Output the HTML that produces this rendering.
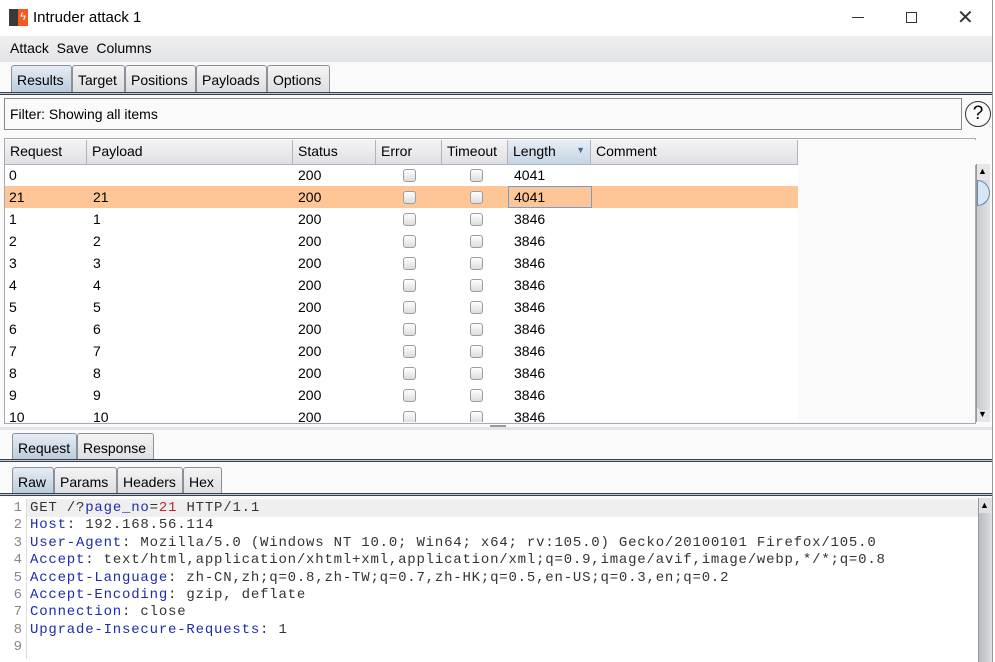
<!DOCTYPE html>
<html><head><meta charset="utf-8"><style>
*{box-sizing:border-box;margin:0;padding:0}
body{width:995px;height:662px;overflow:hidden;background:#fafafa;font-family:"Liberation Sans",Arial,sans-serif;font-size:14px;color:#000;position:relative}
.a{position:absolute}
.tab{position:absolute;height:28px;border:1px solid #8a8f99;border-bottom:none;border-radius:3px 3px 0 0;background:linear-gradient(#f4f4f4,#dcdde0);padding:6px 5px 0 5px;font-size:14px}
.tab.sel{background:linear-gradient(#e6edf4,#b8cadb)}
.line{position:absolute;left:0;width:992px;height:3px;background:#b8cadb;border-top:1px solid #3a3f4a;border-bottom:1px solid #3a3f4a}
.th{position:absolute;top:140px;height:25px;border-right:1px solid #b0b3ba;border-bottom:1px solid #b0b3ba;background:linear-gradient(#f4f4f6,#dfe0e4);padding:3px 5px}
.row{position:absolute;left:5px;width:793px;height:22px}
.row span{position:absolute;top:3px}
.cb{position:absolute;top:5px;width:13px;height:13px;border:1px solid #9a9da3;border-radius:3px;background:linear-gradient(#fff,#dcdcdc)}
.code{position:absolute;left:0;font-family:"Liberation Mono",monospace;font-size:14px;white-space:pre;line-height:17.4px}
.k{color:#1d2bb0}
.ls{letter-spacing:0.8px}
</style></head><body>
<div class="a" style="left:0;top:0;width:995px;height:36px;background:#fff"></div>
<div class="a" style="left:9px;top:9px;width:9px;height:17px;background:#3a3a3a"></div>
<div class="a" style="left:18px;top:9px;width:10px;height:17px;background:#f25a22;color:#fff;font-size:11px;line-height:17px;text-align:center">ϟ</div>
<div class="a" style="left:33px;top:9px;font-size:15px">Intruder attack 1</div>
<div class="a" style="left:852px;top:17px;width:12px;height:1px;background:#333"></div>
<div class="a" style="left:906px;top:12px;width:11px;height:11px;border:1px solid #333"></div>
<div class="a" style="left:957px;top:5px;font-size:20px;color:#333">✕</div>
<div class="a" style="left:992px;top:0;width:3px;height:662px;background:#fff;border-left:1px solid #999"></div>
<div class="a" style="left:0;top:36px;width:992px;height:26px;background:linear-gradient(#f0f0f0,#e2e3e6)"></div>
<div class="a" style="left:10px;top:40px">Attack&nbsp; Save&nbsp; Columns</div>
<div class="tab sel" style="left:11px;top:65px;width:61px">Results</div>
<div class="tab" style="left:72px;top:65px;width:53px">Target</div>
<div class="tab" style="left:125px;top:65px;width:71px">Positions</div>
<div class="tab" style="left:196px;top:65px;width:71px">Payloads</div>
<div class="tab" style="left:267px;top:65px;width:63px">Options</div>
<div class="line" style="top:92px"></div>
<div class="a" style="left:4px;top:98px;width:958px;height:32px;border:1px solid #888;background:#fafafa;padding:7px 5px">Filter: Showing all items</div>
<div class="a" style="left:965px;top:101px;width:26px;height:26px;border:1.5px solid #333;border-radius:50%;text-align:center;font-size:19px;line-height:23px">?</div>
<div class="a" style="left:4px;top:138px;width:972px;height:286px;border:1px solid #a6a9b0;background:#fafafa"></div>
<div class="a" style="left:5px;top:164px;width:793px;height:258px;background:#fff"></div>
<div class="th" style="left:5px;width:82px">Request</div>
<div class="th" style="left:87px;width:206px">Payload</div>
<div class="th" style="left:293px;width:83px">Status</div>
<div class="th" style="left:376px;width:66px">Error</div>
<div class="th" style="left:442px;width:66px">Timeout</div>
<div class="th" style="left:508px;width:83px;background:linear-gradient(#e8eef5,#c5d4e3)">Length<span style="position:absolute;right:5px;top:5px;font-size:9px;color:#4a6a95">▼</span></div>
<div class="th" style="left:591px;width:207px">Comment</div>
<div class="a" style="left:798px;top:140px;width:178px;height:25px;background:#fafafa"></div>
<div class="a" style="left:5px;top:164px;width:793px;height:258px;overflow:hidden">
<div style="position:relative">
<div class="row" style="left:0;top:0"><span style="left:4px">0</span><span style="left:293px">200</span><div class="cb" style="left:398px"></div><div class="cb" style="left:465px"></div><span style="left:509px">4041</span></div>
<div class="row" style="left:0;top:22px;background:#fec596"><span style="left:4px">21</span><span style="left:88px">21</span><span style="left:293px">200</span><div class="cb" style="left:398px"></div><div class="cb" style="left:465px"></div><div style="position:absolute;left:503px;top:0;width:84px;height:22px;border:1px solid #7a9cc6"></div><span style="left:509px">4041</span></div>
<div class="row" style="left:0;top:44px"><span style="left:4px">1</span><span style="left:88px">1</span><span style="left:293px">200</span><div class="cb" style="left:398px"></div><div class="cb" style="left:465px"></div><span style="left:509px">3846</span></div>
<div class="row" style="left:0;top:66px"><span style="left:4px">2</span><span style="left:88px">2</span><span style="left:293px">200</span><div class="cb" style="left:398px"></div><div class="cb" style="left:465px"></div><span style="left:509px">3846</span></div>
<div class="row" style="left:0;top:88px"><span style="left:4px">3</span><span style="left:88px">3</span><span style="left:293px">200</span><div class="cb" style="left:398px"></div><div class="cb" style="left:465px"></div><span style="left:509px">3846</span></div>
<div class="row" style="left:0;top:110px"><span style="left:4px">4</span><span style="left:88px">4</span><span style="left:293px">200</span><div class="cb" style="left:398px"></div><div class="cb" style="left:465px"></div><span style="left:509px">3846</span></div>
<div class="row" style="left:0;top:132px"><span style="left:4px">5</span><span style="left:88px">5</span><span style="left:293px">200</span><div class="cb" style="left:398px"></div><div class="cb" style="left:465px"></div><span style="left:509px">3846</span></div>
<div class="row" style="left:0;top:154px"><span style="left:4px">6</span><span style="left:88px">6</span><span style="left:293px">200</span><div class="cb" style="left:398px"></div><div class="cb" style="left:465px"></div><span style="left:509px">3846</span></div>
<div class="row" style="left:0;top:176px"><span style="left:4px">7</span><span style="left:88px">7</span><span style="left:293px">200</span><div class="cb" style="left:398px"></div><div class="cb" style="left:465px"></div><span style="left:509px">3846</span></div>
<div class="row" style="left:0;top:198px"><span style="left:4px">8</span><span style="left:88px">8</span><span style="left:293px">200</span><div class="cb" style="left:398px"></div><div class="cb" style="left:465px"></div><span style="left:509px">3846</span></div>
<div class="row" style="left:0;top:220px"><span style="left:4px">9</span><span style="left:88px">9</span><span style="left:293px">200</span><div class="cb" style="left:398px"></div><div class="cb" style="left:465px"></div><span style="left:509px">3846</span></div>
<div class="row" style="left:0;top:242px"><span style="left:4px">10</span><span style="left:88px">10</span><span style="left:293px">200</span><div class="cb" style="left:398px"></div><div class="cb" style="left:465px"></div><span style="left:509px">3846</span></div>
</div></div>
<div class="a" style="left:976px;top:164px;width:14px;height:258px;background:#e6e6e8;border-left:1px solid #999"></div>
<div class="a" style="left:977px;top:180px;width:13px;height:230px;background:linear-gradient(90deg,#c8cbd0,#e0e2e6);border-radius:0 0 4px 4px"></div>
<div class="a" style="left:977px;top:180px;width:13px;height:26px;background:#d6e6f5;border:1px solid #6a8aa8;border-radius:0 13px 13px 0"></div>
<div class="a" style="left:978px;top:166px;font-size:9px">▲</div>
<div class="a" style="left:978px;top:409px;font-size:9px">▼</div>
<div class="a" style="left:490px;top:425px;width:16px;height:2px;background:#999"></div>
<div class="a" style="left:0;top:427px;width:992px;height:3px;background:#e2e4ea"></div>
<div class="tab sel" style="left:12px;top:433px;width:65px">Request</div>
<div class="tab" style="left:77px;top:433px;width:77px">Response</div>
<div class="line" style="top:459px"></div>
<div class="tab sel" style="left:12px;top:467px;width:42px">Raw</div>
<div class="tab" style="left:54px;top:467px;width:63px">Params</div>
<div class="tab" style="left:117px;top:467px;width:66px">Headers</div>
<div class="tab" style="left:183px;top:467px;width:39px">Hex</div>
<div class="line" style="top:493px"></div>
<div class="a" style="left:0;top:498px;width:978px;height:164px;background:#fff"></div>
<div class="a" style="left:27px;top:499px;width:951px;height:18px;background:#efefef"></div>
<div class="a" style="left:26px;top:499px;width:1px;height:160px;background:#ddd"></div>
<div class="a" style="left:978px;top:498px;width:14px;height:164px;background:#e0e1e4;border-left:1px solid #999"></div>
<div class="a" style="left:979px;top:513px;width:12px;height:149px;background:linear-gradient(90deg,#b8bbc1,#d8dadf)"></div>
<div class="a" style="left:980px;top:500px;font-size:9px">▲</div>
<div class="a" style="left:0;top:500px">
<div class="code" style="color:#888;left:6px;top:0;width:16px;text-align:right">1
2
3
4
5
6
7
8
9</div>
<div class="code ls" style="left:30px;top:0;color:#333">GET /?<span class="k">page_no</span>=<span style="color:#c0262c">21</span> HTTP/1.1
<span class="k">Host</span>: 192.168.56.114
<span class="k">User-Agent</span>: Mozilla/5.0 (Windows NT 10.0; Win64; x64; rv:105.0) Gecko/20100101 Firefox/105.0
<span class="k">Accept</span>: text/html,application/xhtml+xml,application/xml;q=0.9,image/avif,image/webp,*/*;q=0.8
<span class="k">Accept-Language</span>: zh-CN,zh;q=0.8,zh-TW;q=0.7,zh-HK;q=0.5,en-US;q=0.3,en;q=0.2
<span class="k">Accept-Encoding</span>: gzip, deflate
<span class="k">Connection</span>: close
<span class="k">Upgrade-Insecure-Requests</span>: 1
</div></div>
</body></html>
